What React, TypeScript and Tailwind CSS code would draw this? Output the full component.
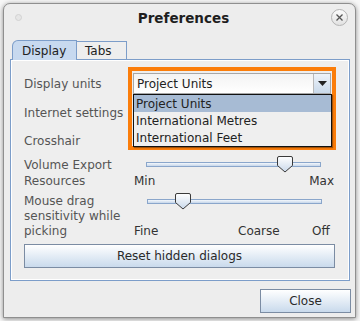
import React from "react";

const font = { fontFamily: '"DejaVu Sans", Verdana, sans-serif' };

function Thumb() {
  return (
    <svg width="16" height="17" viewBox="0 0 16 17" className="block">
      <defs>
        <linearGradient id="tg" x1="0" y1="0" x2="0" y2="1">
          <stop offset="0" stopColor="#ffffff" />
          <stop offset="1" stopColor="#c9d8ea" />
        </linearGradient>
      </defs>
      <path d="M2 0.5 H14 Q15.5 0.5 15.5 2 V9.5 L8 16 L0.5 9.5 V2 Q0.5 0.5 2 0.5 Z" fill="url(#tg)" stroke="#3a3a3a" strokeWidth="1" />
    </svg>
  );
}

function Track({ thumbLeft }: { thumbLeft: number }) {
  return (
    <div className="relative h-[16px] w-[175px]">
      <div className="absolute left-0 right-0 top-[6px] h-[5px] border border-[#8aa6cb] bg-gradient-to-b from-[#f4f8fc] to-[#c6d6ea]" />
      <div className="absolute top-0" style={{ left: thumbLeft }}>
        <Thumb />
      </div>
    </div>
  );
}

function GradButton({ children, className }: { children: React.ReactNode; className?: string }) {
  return (
    <div
      className={
        "flex items-center justify-center border border-[#7b8ca3] bg-gradient-to-b from-[#ffffff] to-[#c9daec] text-[12px] text-[#2a2a2a] " +
        (className ?? "")
      }
    >
      {children}
    </div>
  );
}

export default function App() {
  return (
    <div className="w-[360px] h-[321px] bg-[#f7f7f7] pt-[3px] pl-[3px] overflow-hidden" style={font}>
      <div className="relative w-[353px] h-[315px] rounded-t-[7px] border border-[#8f8f8f] bg-[#ededed] shadow-[0_1px_5px_rgba(0,0,0,0.45)]">
        {/* title bar */}
        <div className="relative h-[28px] flex items-center justify-center pl-[8px]">
          <div className="absolute left-[11px] top-[10px] w-[7px] h-[7px] rounded-full border border-[#d2d2d2] bg-[#e6e6e6]" />
          <span className="text-[13.5px] font-bold text-[#1e1e1e]">Preferences</span>
          <div className="absolute right-[7px] top-[5px] w-[17px] h-[17px] rounded-full border border-[#b4b4b4] bg-gradient-to-b from-[#fbfbfb] to-[#e2e2e2] flex items-center justify-center">
            <svg width="7" height="7" viewBox="0 0 7 7">
              <path d="M0.5 0.5 L6.5 6.5 M6.5 0.5 L0.5 6.5" stroke="#555" strokeWidth="1.3" />
            </svg>
          </div>
        </div>

        {/* tabs */}
        <div className="mt-[8px] ml-[8px] flex items-end h-[19px]">
          <div className="relative z-10 h-[20px] w-[65px] -mb-px rounded-tl-[6px] border border-b-0 border-[#7c9dc9] bg-[#c7d9ef] flex items-center pl-[9px] text-[12px] text-[#222]">
            Display
          </div>
          <div className="h-[18px] w-[50px] border border-l-0 border-b-0 border-[#7c9dc9] bg-[#eeeeee] flex items-center pl-[8px] text-[12px] text-[#222]">
            Tabs
          </div>
        </div>

        {/* panel */}
        <div className="ml-[6px] w-[340px] h-[222px] border border-[#7c9dc9] bg-[#eeeeee] shadow-[inset_0_0_0_1px_#ffffff] text-[12px] text-[#555555]">
          <div className="pl-[13px] pr-[14px] pt-[13px] flex flex-col">
            {/* display units */}
            <div className="flex h-[21px] items-center">
              <span className="w-[109px]">Display units</span>
              <div className="flex w-[198px] h-[21px] border border-[#a7a7a7] bg-gradient-to-b from-[#f3f3f3] to-[#ffffff]">
                <div className="flex-1 flex items-center pl-[3px] text-[#222]">Project Units</div>
                <div className="w-[17px] border-l border-[#b9b9b9] bg-gradient-to-b from-[#eef3f9] to-[#c9d9ea] flex items-center justify-center">
                  <svg width="9" height="5" viewBox="0 0 9 5">
                    <path d="M0 0 H9 L4.5 5 Z" fill="#222" />
                  </svg>
                </div>
              </div>
            </div>
            <div className="flex h-[37px] items-center">
              <span>Internet settings</span>
            </div>
            <div className="flex h-[20px] items-center">
              <span>Crosshair</span>
            </div>

            {/* volume export */}
            <div className="flex mt-[6px] leading-[16px]">
              <div className="w-[110px] flex flex-col">
                <span>Volume Export</span>
                <span>Resources</span>
              </div>
              <div className="w-[200px] flex flex-col">
                <div className="pl-[12px] h-[16px] -mt-[1px]">
                  <Track thumbLeft={131} />
                </div>
                <div className="flex justify-between text-[#333] mt-[1px]">
                  <span>Min</span>
                  <span>Max</span>
                </div>
              </div>
            </div>

            {/* mouse drag */}
            <div className="flex mt-[5px] leading-[15px]">
              <div className="w-[110px] flex flex-col">
                <span>Mouse drag</span>
                <span>sensitivity while</span>
                <span>picking</span>
              </div>
              <div className="w-[200px] flex flex-col">
                <div className="pl-[13px] h-[15px] -mt-[1px]">
                  <Track thumbLeft={28} />
                </div>
                <div className="h-[16px]" />
                <div className="flex text-[#333]">
                  <span className="w-[104px]">Fine</span>
                  <span className="w-[74px]">Coarse</span>
                  <span>Off</span>
                </div>
              </div>
            </div>

            <GradButton className="mt-[5px] h-[24px] w-[311px]">Reset hidden dialogs</GradButton>
          </div>
        </div>

        <div className="flex justify-end pr-[4px] mt-[8px]">
          <GradButton className="h-[24px] w-[91px]">Close</GradButton>
        </div>

        {/* open dropdown overlay with highlight */}
        <div className="absolute left-[124px] top-[63px] w-[208px] h-[83px] border-[4px] border-[#fb7d0a]" />
        <div className="absolute left-[129px] top-[90px] w-[199px] h-[53px] border border-[#111] bg-[#efefef] text-[12px] text-[#222] shadow-[1px_1px_1px_rgba(0,0,0,0.35)]">
          <div className="h-[17px] bg-[#a7bbd4] flex items-center pl-[2px]">Project Units</div>
          <div className="h-[17px] flex items-center pl-[2px]">International Metres</div>
          <div className="h-[17px] flex items-center pl-[2px]">International Feet</div>
        </div>
      </div>
    </div>
  );
}
